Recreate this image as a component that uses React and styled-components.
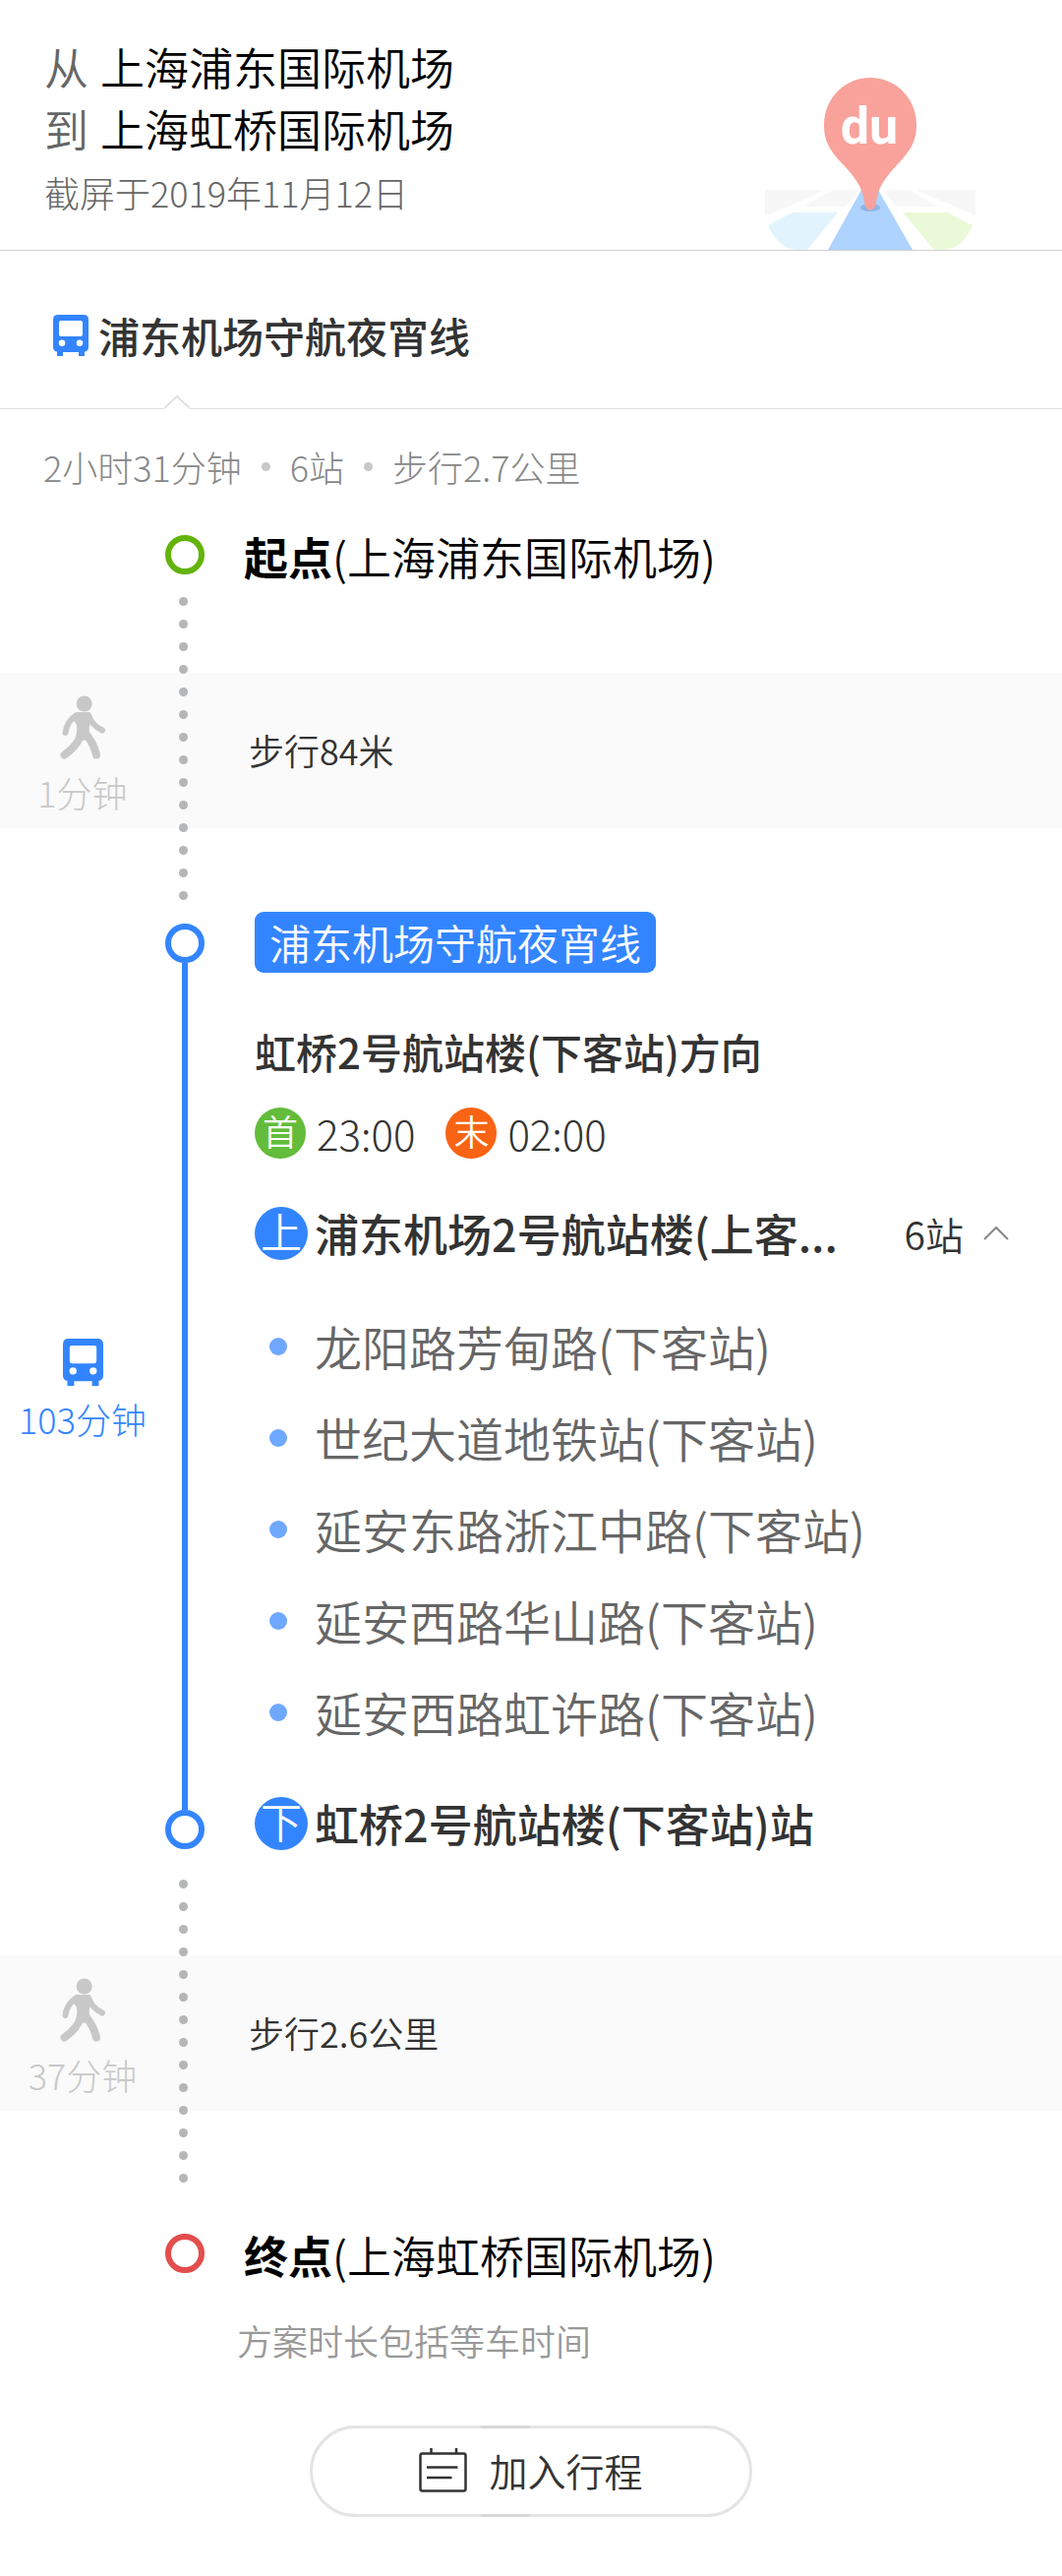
import React from "react"
import styled, { createGlobalStyle, ThemeProvider } from "styled-components"

const theme = {
  color: {
    primary: "#3385ff",
    text: "#333333",
    muted: "#666666",
    faint: "#888888",
    disabled: "#c8c8c8",
    line: "#e0e0e0",
    start: "#63b30a",
    end: "#e34d4d",
  },
  size: {
    sm: "36px",
    md: "39px",
    lg: "42px",
    xl: "45px",
    xxl: "48px",
  },
}

const stops = [
  "龙阳路芳甸路(下客站)",
  "世纪大道地铁站(下客站)",
  "延安东路浙江中路(下客站)",
  "延安西路华山路(下客站)",
  "延安西路虹许路(下客站)",
]

const BusIcon = ({ width, height }) => (
  <svg width={width} height={height} viewBox="0 0 36 42" fill="currentColor" aria-hidden="true">
    <path
      fillRule="evenodd"
      d="M5 0H31Q36 0 36 5V33Q36 36 33 37.500H32V42H26V38H10V42H4V37.500H3Q0 36 0 33V5Q0 0 5 0ZM8 6Q6 6 6 8V20Q6 22 8 22H28Q30 22 30 20V8Q30 6 28 6ZM9 25.500A3.200 3.200 0 1 0 9 32A3.200 3.200 0 1 0 9 25.500ZM27 25.500A3.200 3.200 0 1 0 27 32A3.200 3.200 0 1 0 27 25.500Z"
    />
  </svg>
)

const WalkIcon = () => (
  <svg width="46" height="65" viewBox="0 0 46 65" fill="none" stroke="currentColor" strokeLinecap="round" strokeLinejoin="round" aria-hidden="true">
    <circle cx="24.700" cy="8.500" r="8" fill="currentColor" stroke="none" />
    <path fill="currentColor" stroke="none" d="M17 17H28Q32 18 33 24L30 31Q29 36 31 41L25 46L16 43Q18 36 17 30L12 23Q14 18 17 17Z" />
    <path strokeWidth="6" d="M17 20Q7 26 5.500 38M29 20Q32 30 43 35.500" />
    <path strokeWidth="8" d="M21 40Q18 51 4.500 60.500M26 39Q34 48 37 60.500" />
  </svg>
)

const PlanIcon = () => (
  <svg width="49" height="45" viewBox="0 0 49 45" fill="none" stroke="currentColor" strokeWidth="2.500" aria-hidden="true">
    <rect x="1.500" y="5.500" width="46" height="38" rx="2" />
    <path d="M12.500 0V5M38 0V5M8 19.500H39.500M8 30H33.500" />
  </svg>
)

const Chevron = () => (
  <svg width="26" height="14" viewBox="0 0 26 14" fill="none" stroke="#888888" strokeWidth="2" aria-hidden="true">
    <path d="M1 13L13 1L25 13" />
  </svg>
)

const MapLogo = () => (
  <svg width="214" height="175" viewBox="0 0 214 175" role="img" aria-label="du">
    <g fill="#f7f7f7">
      <path d="M0 114H62L12 136L0 140Z" />
      <path d="M69 114H96L82 131H39Z" />
      <path d="M120 114H147L175 131H132Z" />
      <path d="M153 114H214V140L203 135Z" />
    </g>
    <path fill="#e1f4fd" d="M28 137H74L43 175H32Q14 174 3 150Z" />
    <path fill="#eafad8" d="M140 137H185L211 150Q202 173 182 175H172Z" />
    <path fill="#aed3ff" d="M98 114H115L150 175H64Z" />
    <ellipse cx="107" cy="132" rx="10" ry="4" fill="#8fb3e6" />
    <path
      fill="#f8a29b"
      d="M107 0C133 0 154 21 154 48C154 67 146 76 134 89C122 102 117 109 114 121L112 131Q107 138 102 131L100 121C97 109 92 102 80 89C68 76 60 67 60 48C60 21 81 0 107 0Z"
    />
    <text x="106" y="67" textAnchor="middle" fill="#ffffff" fontFamily="Roboto, sans-serif" fontSize="52" fontWeight="700">du</text>
  </svg>
)

const Walk = ({ minutes, children }) => (
  <WalkLeg>
    <WalkBand>
      <Side>
        <WalkIcon />
        <Duration>{minutes}</Duration>
      </Side>
      <WalkText>{children}</WalkText>
    </WalkBand>
    <DotRail>
      {Array.from({ length: 14 }, (_, i) => <RailDot key={i} />)}
    </DotRail>
  </WalkLeg>
)

export default function App() {
  return (
    <ThemeProvider theme={theme}>
      <GlobalStyle />
      <Header>
        <div>
          <Place><PlaceLabel>从</PlaceLabel>上海浦东国际机场</Place>
          <Place><PlaceLabel>到</PlaceLabel>上海虹桥国际机场</Place>
          <Taken>截屏于2019年11月12日</Taken>
        </div>
        <MapLogo />
      </Header>

      <RouteBar>
        <RouteTab type="button">
          <BusIcon width={36} height={42} />
          浦东机场守航夜宵线
        </RouteTab>
        <Notch width="26" height="14" viewBox="0 0 26 14" aria-hidden="true">
          <path d="M0 13L13 1L26 13V14H0Z" fill="#ffffff" />
          <path d="M0 13L13 1L26 13" fill="none" stroke="#e0e0e0" strokeWidth="2" />
        </Notch>
      </RouteBar>

      <Summary>
        <span>2小时31分钟</span>
        <SummaryDot />
        <span>6站</span>
        <SummaryDot />
        <span>步行2.7公里</span>
      </Summary>

      <main>
        <Endpoint>
          <Ring $tone="start" />
          <EndpointText><b>起点</b>(上海浦东国际机场)</EndpointText>
        </Endpoint>

        <Walk minutes="1分钟">步行84米</Walk>

        <TransitLeg>
          <Side $active>
            <BusIcon width={41} height={48} />
            <Duration>103分钟</Duration>
          </Side>
          <LineRail>
            <Ring $tone="primary" />
            <RailLine />
            <Ring $tone="primary" />
          </LineRail>
          <TransitBody>
            <LineBadge>浦东机场守航夜宵线</LineBadge>
            <Direction>虹桥2号航站楼(下客站)方向</Direction>
            <Times>
              <Time><Mark $color="#63bc3a">首</Mark>23:00</Time>
              <Time><Mark $color="#f96414">末</Mark>02:00</Time>
            </Times>
            <Station>
              <Mark $large $color="#3385ff">上</Mark>
              <StationName>浦东机场2号航站楼(上客...</StationName>
              <StopsToggle type="button" aria-expanded="true">6站<Chevron /></StopsToggle>
            </Station>
            <StopList>
              {stops.map(stop => <Stop key={stop}>{stop}</Stop>)}
            </StopList>
            <Station>
              <Mark $large $color="#3385ff">下</Mark>
              <StationName>虹桥2号航站楼(下客站)站</StationName>
            </Station>
          </TransitBody>
        </TransitLeg>

        <Walk minutes="37分钟">步行2.6公里</Walk>

        <Endpoint $last>
          <Ring $tone="end" />
          <EndpointText><b>终点</b>(上海虹桥国际机场)</EndpointText>
        </Endpoint>
        <Note>方案时长包括等车时间</Note>
      </main>

      <Footer>
        <AddButton type="button">
          <PlanIcon />
          加入行程
        </AddButton>
      </Footer>
    </ThemeProvider>
  )
}

const GlobalStyle = createGlobalStyle`
  * {
    box-sizing: border-box;
  }
  body {
    margin: 0;
    background: #ffffff;
    color: ${props => props.theme.color.text};
    font-family: "Noto Sans CJK SC", sans-serif;
    font-weight: 350;
  }
  button {
    border: 0;
    padding: 0;
    background: none;
    color: inherit;
    font: inherit;
    cursor: pointer;
  }
  p, h1, h2, ul {
    margin: 0;
    padding: 0;
  }
  svg {
    display: block;
    flex: none;
  }
`

const Header = styled.header`
  display: flex;
  justify-content: space-between;
  align-items: flex-end;
  padding: 36px 88px 0 45px;
  border-bottom: 1px solid #d0d0d0;
`

const Place = styled.p`
  display: flex;
  gap: 12px;
  color: #000000;
  font-size: ${props => props.theme.size.xl};
  line-height: 63px;
`

const PlaceLabel = styled.span`
  color: ${props => props.theme.color.muted};
`

const Taken = styled.p`
  padding-bottom: 26px;
  color: ${props => props.theme.color.muted};
  font-size: ${props => props.theme.size.sm};
  font-weight: 300;
  line-height: 66px;
`

const RouteBar = styled.nav`
  position: relative;
  padding: 56px 54px 44px;
  border-bottom: 1px solid ${props => props.theme.color.line};
`

const RouteTab = styled.button`
  display: flex;
  align-items: center;
  gap: 10px;
  font-size: ${props => props.theme.size.lg};
  font-weight: 500;
  line-height: 60px;

  svg {
    color: ${props => props.theme.color.primary};
  }
`

const Notch = styled.svg`
  position: absolute;
  bottom: -1px;
  left: 167px;
`

const Summary = styled.div`
  display: flex;
  align-items: center;
  gap: 20px;
  padding: 0 44px;
  color: ${props => props.theme.color.faint};
  font-size: ${props => props.theme.size.sm};
  font-weight: 300;
  line-height: 116px;
`

const SummaryDot = styled.i`
  width: 9px;
  height: 9px;
  border-radius: 50%;
  background: ${props => props.theme.color.disabled};
`

const Endpoint = styled.section`
  display: flex;
  align-items: center;
  gap: 40px;
  padding: ${props => (props.$last ? "32px 0 0 168px" : "0 0 0 168px")};
`

const Ring = styled.span`
  flex: none;
  width: 40px;
  height: 40px;
  border: 6px solid ${props => props.theme.color[props.$tone]};
  border-radius: 50%;
`

const EndpointText = styled.h2`
  padding-top: 4px;
  color: #000000;
  font-size: ${props => props.theme.size.xl};
  font-weight: 350;
  line-height: 60px;

  b {
    font-weight: 700;
  }
`

/* grey band in the middle row, dotted rail running through all three */
const WalkLeg = styled.section`
  display: grid;
  grid-template-columns: 168px 40px 1fr;
  grid-template-rows: 88px auto 81px;
`

const WalkBand = styled.div`
  display: grid;
  grid-template-columns: 168px 1fr;
  grid-column: 1 / -1;
  grid-row: 2;
  align-items: center;
  padding: 23px 0 17px;
  background: #fafafa;
`

const DotRail = styled.div`
  display: flex;
  flex-direction: column;
  align-items: center;
  grid-column: 2;
  grid-row: 1 / -1;
  gap: 14px;
  padding: 11px 3px 0 0;
`

const RailDot = styled.i`
  width: 9px;
  height: 9px;
  border-radius: 50%;
  background: #b4b6b8;
`

const Side = styled.div`
  display: flex;
  flex-direction: column;
  align-items: center;
  justify-content: center;
  gap: 13px;
  color: ${props => (props.$active ? props.theme.color.primary : props.theme.color.disabled)};
`

const Duration = styled.span`
  font-size: ${props => props.theme.size.sm};
  font-weight: 300;
  line-height: 40px;
`

const WalkText = styled.p`
  padding: 0 0 8px 85px;
  font-size: ${props => props.theme.size.sm};
  line-height: 54px;
`

const TransitLeg = styled.section`
  display: grid;
  grid-template-columns: 168px 40px 1fr;
`

const LineRail = styled.div`
  display: flex;
  flex-direction: column;
  align-items: center;
  padding: 16px 0 20px;
`

const RailLine = styled.span`
  flex: 1;
  width: 6px;
  background: ${props => props.theme.color.primary};
`

const TransitBody = styled.div`
  padding: 4px 54px 19px 51px;
`

const LineBadge = styled.span`
  display: block;
  width: fit-content;
  padding: 0 15px;
  border-radius: 9px;
  background: ${props => props.theme.color.primary};
  color: #ffffff;
  font-size: ${props => props.theme.size.lg};
  line-height: 62px;
`

const Direction = styled.h2`
  margin: 48px 0 25px;
  font-size: ${props => props.theme.size.lg};
  font-weight: 500;
  line-height: 64px;
`

const Times = styled.div`
  display: flex;
  gap: 31px;
  margin-bottom: 49px;
`

const Time = styled.span`
  display: flex;
  align-items: center;
  gap: 11px;
  font-size: ${props => props.theme.size.lg};
  font-weight: 300;
  line-height: 52px;
`

const Mark = styled.span`
  flex: none;
  width: ${props => (props.$large ? "54px" : "52px")};
  padding-bottom: 6px;
  border-radius: 50%;
  background: ${props => props.$color};
  color: #ffffff;
  font-size: ${props => (props.$large ? props.theme.size.lg : props.theme.size.sm)};
  font-weight: 350;
  line-height: ${props => (props.$large ? "48px" : "46px")};
  text-align: center;
`

const Station = styled.div`
  display: flex;
  align-items: center;
  gap: 7px;
`

const StationName = styled.h2`
  font-size: ${props => props.theme.size.xl};
  font-weight: 500;
  line-height: 54px;
  white-space: nowrap;
`

const StopsToggle = styled.button`
  display: flex;
  align-items: center;
  gap: 20px;
  margin-left: auto;
  font-size: ${props => props.theme.size.md};
  line-height: 54px;
`

const StopList = styled.ul`
  margin: 41px 0 40px;
  list-style: none;
`

const Stop = styled.li`
  display: flex;
  align-items: center;
  gap: 28px;
  padding-left: 15px;
  color: ${props => props.theme.color.muted};
  font-size: ${props => props.theme.size.xxl};
  line-height: 93px;

  &::before {
    content: "";
    width: 18px;
    height: 18px;
    border-radius: 50%;
    background: #6fa8ff;
  }
`

const Note = styled.p`
  padding: 26px 0 0 241px;
  color: #999999;
  font-size: ${props => props.theme.size.sm};
  line-height: 60px;
`

const Footer = styled.footer`
  display: flex;
  justify-content: center;
  padding: 57px 0 60px;
`

const AddButton = styled.button`
  && {
    position: relative;
    display: flex;
    align-items: center;
    justify-content: center;
    gap: 22px;
    width: 450px;
    height: 93px;
    padding-bottom: 3px;
    border: 3px solid #e4e4e4;
    border-radius: 47px;
    font-size: ${props => props.theme.size.md};
  }

  /* darker stretch of the outline above and below the icon */
  &::before {
    content: "";
    position: absolute;
    top: -3px;
    bottom: -3px;
    left: 171px;
    width: 50px;
    border: solid #d8d8d8;
    border-width: 3px 0;
  }
`
